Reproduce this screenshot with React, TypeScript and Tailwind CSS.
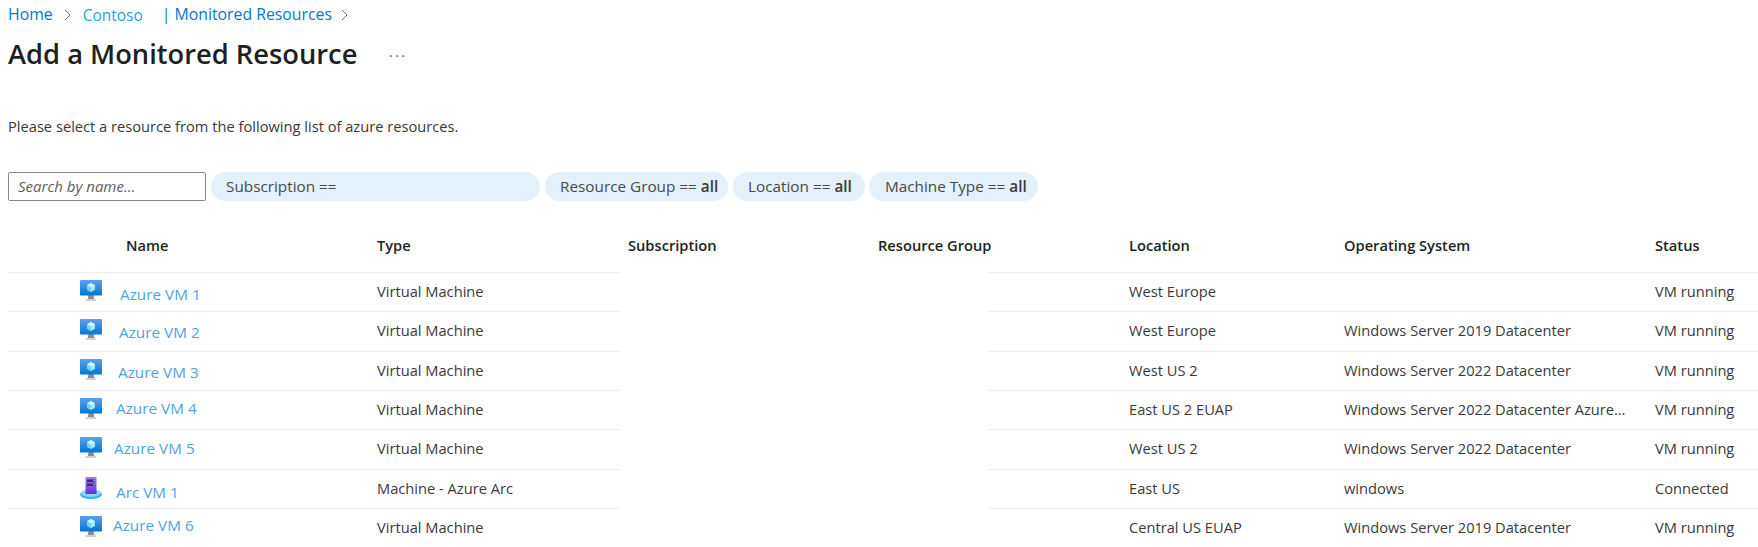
import React from "react";

function VmIcon() {
  return (
    <svg width="22" height="21" viewBox="0 0 22 21" className="block">
      <defs>
        <linearGradient id="vmg" x1="0" y1="0" x2="0" y2="1">
          <stop offset="0" stopColor="#5ea0ef" />
          <stop offset="1" stopColor="#0078d4" />
        </linearGradient>
      </defs>
      <path d="M8.5 15h5l.7 4H7.8z" fill="#8a8a8a" />
      <path d="M6 19h10l.6 2H5.4z" fill="#d0d0d0" />
      <rect x="0" y="0" width="22" height="15.5" rx="0.7" fill="url(#vmg)" />
      <path d="M11 3l4 2.2v4.6L11 12l-4-2.2V5.2z" fill="#9cebff" />
      <path d="M11 3l4 2.2L11 7.4 7 5.2z" fill="#d6f6ff" />
      <path d="M11 7.4V12l-4-2.2V5.2z" fill="#6fd3f5" />
    </svg>
  );
}

function ArcIcon() {
  return (
    <svg width="22" height="22" viewBox="0 0 22 22" className="block">
      <defs>
        <linearGradient id="arcg" x1="0" y1="0" x2="0" y2="1">
          <stop offset="0" stopColor="#a67af4" />
          <stop offset="1" stopColor="#6f2fd6" />
        </linearGradient>
      </defs>
      <ellipse cx="11" cy="17.5" rx="11" ry="4.5" fill="#38b6ee" />
      <ellipse cx="11" cy="16" rx="10" ry="3.8" fill="#7fdcfb" />
      <rect x="5.5" y="0" width="11" height="17" rx="0.6" fill="url(#arcg)" />
      <rect x="7" y="2.5" width="8" height="2.5" fill="#3a2a78" />
      <rect x="7" y="6.5" width="8" height="2.5" fill="#3a2a78" />
      <rect x="13.3" y="3" width="1.3" height="1.4" fill="#7fe3f5" />
      <rect x="13.3" y="7" width="1.3" height="1.4" fill="#7fe3f5" />
    </svg>
  );
}

type Row = {
  name: string;
  gapClass: string;
  nudgeClass: string;
  type: string;
  location: string;
  os: string;
  status: string;
  arc?: boolean;
  height: string;
};

const rows: Row[] = [
  { name: "Azure VM 1", gapClass: "w-[18px]", nudgeClass: "translate-y-[2px]", type: "Virtual Machine", location: "West Europe", os: "", status: "VM running", height: "h-[39px]" },
  { name: "Azure VM 2", gapClass: "w-[17px]", nudgeClass: "translate-y-[1px]", type: "Virtual Machine", location: "West Europe", os: "Windows Server 2019 Datacenter", status: "VM running", height: "h-[40px]" },
  { name: "Azure VM 3", gapClass: "w-[16px]", nudgeClass: "translate-y-[1px]", type: "Virtual Machine", location: "West US 2", os: "Windows Server 2022 Datacenter", status: "VM running", height: "h-[39px]" },
  { name: "Azure VM 4", gapClass: "w-[14px]", nudgeClass: "translate-y-[-2px]", type: "Virtual Machine", location: "East US 2 EUAP", os: "Windows Server 2022 Datacenter Azure Edition", status: "VM running", height: "h-[39px]" },
  { name: "Azure VM 5", gapClass: "w-[12px]", nudgeClass: "translate-y-[-1px]", type: "Virtual Machine", location: "West US 2", os: "Windows Server 2022 Datacenter", status: "VM running", height: "h-[40px]" },
  { name: "Arc VM 1", gapClass: "w-[14px]", nudgeClass: "translate-y-[3px]", type: "Machine - Azure Arc", location: "East US", os: "windows", status: "Connected", arc: true, height: "h-[39px]" },
  { name: "Azure VM 6", gapClass: "w-[11px]", nudgeClass: "translate-y-[-3px]", type: "Virtual Machine", location: "Central US EUAP", os: "Windows Server 2019 Datacenter", status: "VM running", height: "h-[39px]" },
];

function Chevron() {
  return (
    <svg width="7" height="12" viewBox="0 0 7 12" className="shrink-0">
      <path d="M1 1l5 5-5 5" fill="none" stroke="#605e5c" strokeWidth="0.9" />
    </svg>
  );
}

function Chip({ label, value, className }: { label: string; value?: string; className: string }) {
  return (
    <div className={`flex h-[29px] items-center rounded-full bg-[#e4f0fa] text-[#4a4947] ${className}`}>
      <span className="whitespace-pre">
        {label}
        {value ? <b className="font-semibold text-[#3b3a39]"> {value}</b> : null}
      </span>
    </div>
  );
}

export default function App() {
  return (
    <div
      className="h-[547px] w-[1758px] overflow-hidden bg-white pl-2 text-[14.67px] text-[#3b3a39]"
      style={{ fontFamily: '"Open Sans", "Noto Sans", sans-serif' }}
    >
      <nav className="flex h-[30px] items-center text-[15.8px] text-[#0078d4]">
        <span>Home</span>
        <span className="ml-[11px]"><Chevron /></span>
        <span className="ml-[12px] translate-y-[1px] text-[15.5px] text-[#1aa3f0]">Contoso</span>
        <span className="ml-[19px]">| Monitored Resources</span>
        <span className="ml-[9px]"><Chevron /></span>
      </nav>

      <div className="flex h-[48px] items-center">
        <h1 className="w-[381px] text-[27.3px] font-semibold text-[#201f1e]">Add a Monitored Resource</h1>
        <span className="translate-y-[-3px] text-[14px] tracking-[2.5px] text-[#605e5c]">...</span>
      </div>

      <p className="mt-[39px] h-[19px] leading-[19px]">Please select a resource from the following list of azure resources.</p>

      <div className="mt-[36px] flex h-[29px] items-center text-[15.3px]">
        <div className="flex h-[29px] w-[198px] items-center rounded-[2px] border border-[#8a8886] pl-[9px] text-[15px] italic text-[#605e5c]">
          Search by name...
        </div>
        <Chip label="Subscription ==" className="ml-[5px] w-[329px] pl-[15px]" />
        <Chip label="Resource Group ==" value="all" className="ml-[5px] w-[183px] pl-[15px]" />
        <Chip label="Location ==" value="all" className="ml-[5px] w-[132px] pl-[15px]" />
        <Chip label="Machine Type ==" value="all" className="ml-[4px] w-[169px] pl-[16px]" />
      </div>

      <div className="mt-[24px] flex h-[47px] items-center pb-[8px] font-semibold text-[#201f1e]">
        <div className="w-[369px] pl-[118px]">Name</div>
        <div className="w-[251px]">Type</div>
        <div className="w-[250px]">Subscription</div>
        <div className="w-[251px]">Resource Group</div>
        <div className="w-[215px]">Location</div>
        <div className="w-[311px]">Operating System</div>
        <div>Status</div>
      </div>

      <div className="flex h-px">
        <div className="w-[612px] bg-[#eeeeee]" />
        <div className="w-[368px]" />
        <div className="flex-1 bg-[#eeeeee]" />
      </div>

      {rows.map((r) => (
        <div key={r.name} className={`flex ${r.height}`}>
          <div className="flex w-[612px] items-center border-b border-[#eeeeee]">
            <div className="flex h-full w-[369px] items-center pl-[72px]">
              <span className="mt-[7px] self-start">{r.arc ? <ArcIcon /> : <VmIcon />}</span>
              <span className={`shrink-0 ${r.gapClass}`} />
              <span className={`whitespace-nowrap text-[15.3px] text-[#4fa3e3] ${r.nudgeClass}`}>{r.name}</span>
            </div>
            <div className="mb-[3px]">{r.type}</div>
          </div>
          <div className="w-[368px]" />
          <div className="flex min-w-0 flex-1 items-center border-b border-[#eeeeee] pb-[3px] pl-[141px]">
            <div className="w-[215px]">{r.location}</div>
            <div className="w-[311px] truncate pr-[28px]">{r.os}</div>
            <div>{r.status}</div>
          </div>
        </div>
      ))}
    </div>
  );
}
